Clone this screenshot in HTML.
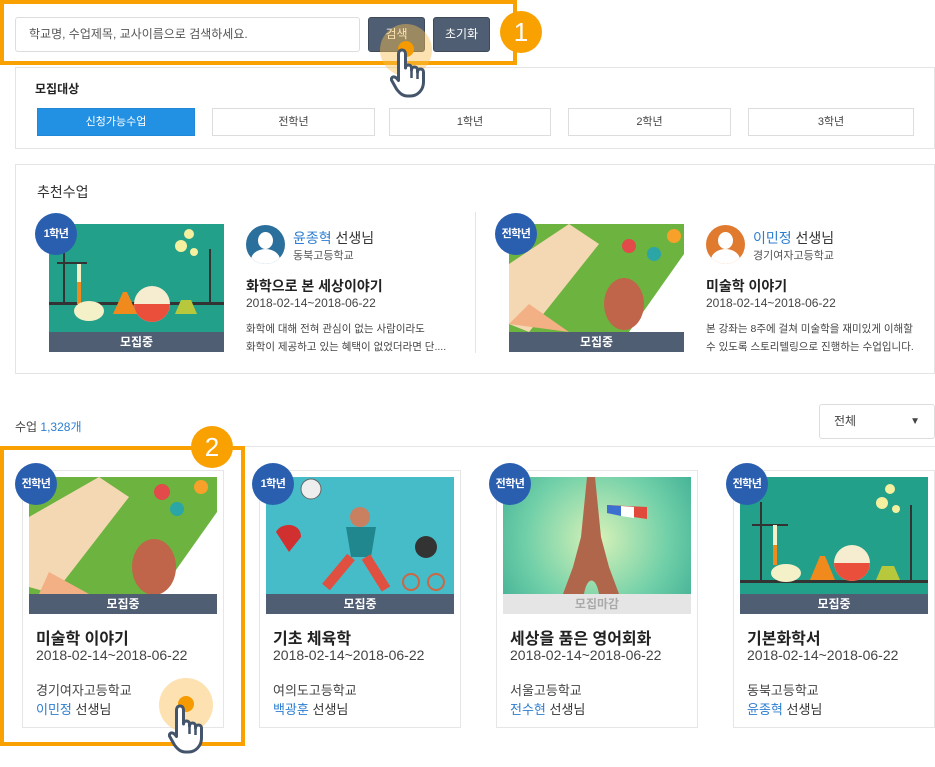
<!DOCTYPE html>
<html><head><meta charset="utf-8"><style>
*{box-sizing:border-box;margin:0;padding:0}
body{width:935px;height:767px;background:#fff;font-family:"Liberation Sans","Noto Sans CJK KR",sans-serif;color:#333;position:relative;overflow:hidden}
.a{position:absolute}
.box{position:absolute;border:1px solid #e4e4e4;background:#fff}
.btn{position:absolute;background:#4f5e72;border:1px solid #3e4a5a;border-radius:3px;color:#fff;font-size:12px;text-align:center;line-height:32px}
.tab{position:absolute;top:108px;height:28px;border:1px solid #ddd;font-size:11px;text-align:center;line-height:26px;color:#444;background:#fff}
.badge{position:absolute;width:42px;height:42px;border-radius:50%;background:#2a5fb0;color:#fff;font-size:11px;font-weight:bold;text-align:center;line-height:42px;letter-spacing:-0.5px}
.ov{position:absolute;left:0;right:0;bottom:0;height:20px;background:#4f5e72;color:#fff;font-size:12px;font-weight:bold;text-align:center;line-height:20px}
.img{position:absolute;overflow:hidden}
.card{position:absolute;top:470px;width:202px;height:258px;border:1px solid #e6e6e6;background:#fff}
.card .t{position:absolute;left:13px;top:154px;font-size:16px;font-weight:bold;color:#222}
.card .d{position:absolute;left:13px;top:176px;font-size:14px;color:#444}
.card .s{position:absolute;left:13px;top:209px;font-size:13px;color:#444}
.card .n{position:absolute;left:13px;top:228px;font-size:13px;color:#333}
.blue{color:#2d7ed0}
.num{position:absolute;width:42px;height:42px;border-radius:50%;background:#f9a100;color:#fff;font-size:26px;text-align:center;line-height:42px}
</style></head><body>

<!-- search -->
<div class="a" style="left:15px;top:17px;width:345px;height:35px;border:1px solid #ddd;border-radius:3px;font-size:12px;color:#555;padding-left:13px;line-height:33px">학교명, 수업제목, 교사이름으로 검색하세요.</div>
<div class="btn" style="left:368px;top:17px;width:57px;height:35px">검색</div>
<div class="btn" style="left:433px;top:17px;width:57px;height:35px">초기화</div>
<div class="a" style="left:0;top:0;width:517px;height:65px;border:4px solid #f9a100"></div>
<div class="num" style="left:500px;top:11px">1</div>

<!-- 모집대상 -->
<div class="box" style="left:15px;top:67px;width:920px;height:82px"></div>
<div class="a" style="left:35px;top:80px;font-size:12px;font-weight:bold;color:#222">모집대상</div>
<div class="tab" style="left:37px;width:158px;background:#2391e3;border-color:#2188d8;color:#fff">신청가능수업</div>
<div class="tab" style="left:212px;width:163px">전학년</div>
<div class="tab" style="left:389px;width:162px">1학년</div>
<div class="tab" style="left:568px;width:163px">2학년</div>
<div class="tab" style="left:748px;width:166px">3학년</div>

<!-- pointer 1 -->
<div class="a" style="left:380px;top:24px;width:52px;height:52px;border-radius:50%;background:rgba(249,190,80,.45)"></div>
<div class="a" style="left:398px;top:41px;width:16px;height:16px;border-radius:50%;background:#f59a00"></div>
<svg class="a" style="left:390px;top:46px" width="48" height="52" viewBox="0 0 48 52"><path d="M12 4c2.5 0 3.5 2 3.5 4v14c0-2 1.5-3 3-3s3 1 3 3v2c0-2 1.5-3 3-3s3 1 3 3v2c0-2 1.5-3 3-3s3 1 3 3v10c0 8-6 14-13 14h-3c-5 0-8-3-11-7L2 35c-1.5-2 0-4.5 2.5-4 1.5.3 3 2 4 3.5V8c0-2 1-4 3.5-4z" fill="#fff" stroke="#44546a" stroke-width="3" stroke-linejoin="round"/><path d="M21.5 24v8M27.5 26v7M33.5 28v6" stroke="#44546a" stroke-width="2.5"/></svg>

<!-- 추천수업 -->
<div class="box" style="left:15px;top:164px;width:920px;height:210px"></div>
<div class="a" style="left:37px;top:182px;font-size:14px;color:#333">추천수업</div>
<div class="a" style="left:475px;top:212px;width:1px;height:141px;background:#e4e4e4"></div>

<div class="img" style="left:49px;top:224px;width:175px;height:128px;background:#22a08a">
 <svg width="175" height="128" viewBox="0 0 175 128"><rect x="0" y="78" width="175" height="3" fill="#333"/><rect x="14" y="20" width="2" height="60" fill="#333"/><rect x="160" y="25" width="2" height="55" fill="#333"/><rect x="8" y="38" width="30" height="2" fill="#333"/><rect x="28" y="40" width="4" height="40" fill="#f4f0c8"/><rect x="28" y="58" width="4" height="22" fill="#f08a1c"/><ellipse cx="40" cy="95" rx="15" ry="10" fill="#f4f0c8" transform="translate(0,-8)"/><path d="M64 90l10-22h4l10 22z" fill="#f08a1c"/><circle cx="103" cy="80" r="18" fill="#f6ecd0"/><path d="M85 80a18 18 0 0036 0z" fill="#ea4f3c"/><path d="M126 90l6-14h10l6 14z" fill="#b8c83c"/><circle cx="140" cy="10" r="5" fill="#f4f0a0"/><circle cx="132" cy="22" r="6" fill="#f4f0a0"/><circle cx="145" cy="28" r="4" fill="#f4f0a0"/></svg>
 <div class="ov">모집중</div></div>
<div class="badge" style="left:35px;top:213px">1학년</div>
<div class="a" style="left:246px;top:225px;width:39px;height:39px;border-radius:50%;background:#2b6f9c;overflow:hidden"><div class="a" style="left:12px;top:7px;width:15px;height:17px;border-radius:50%;background:#fff"></div><div class="a" style="left:5px;top:24px;width:29px;height:22px;border-radius:50%;background:#fff"></div></div>
<div class="a" style="left:293px;top:228px;font-size:14px"><span class="blue">윤종혁</span> 선생님</div>
<div class="a" style="left:293px;top:247px;font-size:11px;color:#555">동북고등학교</div>
<div class="a" style="left:246px;top:276px;font-size:14px;font-weight:bold;color:#222">화학으로 본 세상이야기</div>
<div class="a" style="left:246px;top:296px;font-size:12px;color:#444">2018-02-14~2018-06-22</div>
<div class="a" style="left:246px;top:320px;font-size:10.5px;color:#444;line-height:18px">화학에 대해 전혀 관심이 없는 사람이라도<br>화학이 제공하고 있는 혜택이 없었더라면 단....</div>

<div class="img" style="left:509px;top:224px;width:175px;height:128px;background:#6db33f">
 <svg width="175" height="128" viewBox="0 0 175 128"><path d="M0 40L60 0 90 20 20 108 0 100z" fill="#f4d8b4"/><path d="M120 108L175 30V108z" fill="#fff"/><ellipse cx="115" cy="80" rx="20" ry="26" fill="#c0654a"/><circle cx="120" cy="22" r="7" fill="#e34a4a"/><circle cx="145" cy="30" r="7" fill="#2ba5a5"/><circle cx="165" cy="12" r="7" fill="#f7a12a"/><path d="M0 100L20 80 60 108z" fill="#f2b084"/></svg>
 <div class="ov">모집중</div></div>
<div class="badge" style="left:495px;top:213px">전학년</div>
<div class="a" style="left:706px;top:225px;width:39px;height:39px;border-radius:50%;background:#e07a2e;overflow:hidden"><div class="a" style="left:12px;top:7px;width:15px;height:17px;border-radius:50%;background:#fff"></div><div class="a" style="left:5px;top:24px;width:29px;height:22px;border-radius:50%;background:#fff"></div></div>
<div class="a" style="left:753px;top:228px;font-size:14px"><span class="blue">이민정</span> 선생님</div>
<div class="a" style="left:753px;top:247px;font-size:11px;color:#555">경기여자고등학교</div>
<div class="a" style="left:706px;top:276px;font-size:14px;font-weight:bold;color:#222">미술학 이야기</div>
<div class="a" style="left:706px;top:296px;font-size:12px;color:#444">2018-02-14~2018-06-22</div>
<div class="a" style="left:706px;top:320px;font-size:10.5px;color:#444;line-height:18px">본 강좌는 8주에 걸쳐 미술학을 재미있게 이해할<br>수 있도록 스토리텔링으로 진행하는 수업입니다.</div>

<!-- list header -->
<div class="a" style="left:15px;top:418px;font-size:12px;color:#444">수업 <span class="blue">1,328개</span></div>
<div class="a" style="left:819px;top:404px;width:116px;height:35px;border:1px solid #ddd;border-radius:3px;font-size:12px;color:#444;padding-left:14px;line-height:33px">전체<span class="a" style="right:14px;top:0;font-size:10px">▼</span></div>
<div class="a" style="left:0;top:446px;width:935px;height:1px;background:#e6e6e6"></div>

<!-- cards -->
<div class="card" style="left:22px">
 <div class="img" style="left:6px;top:6px;width:188px;height:137px;background:#6db33f">
 <svg width="188" height="117" viewBox="0 0 188 117"><path d="M0 40L70 0 100 20 25 117 0 110z" fill="#f4d8b4"/><path d="M130 117L188 35V117z" fill="#fff"/><ellipse cx="125" cy="90" rx="22" ry="28" fill="#c0654a"/><circle cx="133" cy="15" r="8" fill="#e34a4a"/><circle cx="148" cy="32" r="7" fill="#2ba5a5"/><circle cx="172" cy="10" r="7" fill="#f7a12a"/><path d="M20 95l40 22H10z" fill="#f2b084"/></svg>
 <div class="ov">모집중</div></div>
 <div class="t">미술학 이야기</div><div class="d">2018-02-14~2018-06-22</div><div class="s">경기여자고등학교</div><div class="n"><span class="blue">이민정</span> 선생님</div>
</div>
<div class="card" style="left:259px">
 <div class="img" style="left:6px;top:6px;width:188px;height:137px;background:#46bcc8">
 <svg width="188" height="117" viewBox="0 0 188 117"><circle cx="94" cy="40" r="10" fill="#c88060"/><path d="M80 50h30l-5 30H85z" fill="#21878f"/><path d="M85 80l-25 30M100 80l20 32" stroke="#e05040" stroke-width="10"/><path d="M10 55c5-10 25-10 25 5l-12 15z" fill="#d03030"/><circle cx="45" cy="12" r="10" fill="#eee" stroke="#666"/><circle cx="160" cy="70" r="11" fill="#333"/><circle cx="145" cy="105" r="8" fill="none" stroke="#c64" stroke-width="2"/><circle cx="170" cy="105" r="8" fill="none" stroke="#c64" stroke-width="2"/></svg>
 <div class="ov">모집중</div></div>
 <div class="t">기초 체육학</div><div class="d">2018-02-14~2018-06-22</div><div class="s">여의도고등학교</div><div class="n"><span class="blue">백광훈</span> 선생님</div>
</div>
<div class="card" style="left:496px">
 <div class="img" style="left:6px;top:6px;width:188px;height:137px;background:radial-gradient(circle at 50% 45%,#d8f2b8,#6fcfa8 60%,#3fae94)">
 <svg width="188" height="117" viewBox="0 0 188 117"><path d="M84 0h8l6 60 8 30 10 27H96c-3-18-12-18-15 0H60l10-27 8-30z" fill="#b0664a"/><path d="M104 28l40 2 0 12-40-6z" fill="#e04a3c"/><path d="M104 28l14 1v10l-14-3z" fill="#3d6fd0"/><path d="M118 29l13 1v11l-13-2z" fill="#fff"/></svg>
 <div class="ov" style="background:#e5e5e5;color:#aaa">모집마감</div></div>
 <div class="t">세상을 품은 영어회화</div><div class="d">2018-02-14~2018-06-22</div><div class="s">서울고등학교</div><div class="n"><span class="blue">전수현</span> 선생님</div>
</div>
<div class="card" style="left:733px">
 <div class="img" style="left:6px;top:6px;width:188px;height:137px;background:#22a08a">
 <svg width="188" height="117" viewBox="0 0 188 117"><rect x="0" y="103" width="188" height="3" fill="#333"/><rect x="20" y="25" width="2" height="80" fill="#333"/><rect x="170" y="28" width="2" height="77" fill="#333"/><rect x="12" y="47" width="36" height="2" fill="#333"/><rect x="33" y="48" width="4" height="40" fill="#f4f0c8"/><rect x="33" y="68" width="4" height="20" fill="#f08a1c"/><ellipse cx="46" cy="96" rx="15" ry="9" fill="#f4f0c8"/><path d="M70 103l10-24h5l10 24z" fill="#f08a1c"/><circle cx="112" cy="86" r="18" fill="#f6ecd0"/><path d="M94 86a18 18 0 0036 0z" fill="#ea4f3c"/><path d="M136 103l6-14h12l6 14z" fill="#b8c83c"/><circle cx="150" cy="12" r="5" fill="#f4f0a0"/><circle cx="142" cy="26" r="6" fill="#f4f0a0"/><circle cx="156" cy="32" r="4" fill="#f4f0a0"/></svg>
 <div class="ov">모집중</div></div>
 <div class="t">기본화학서</div><div class="d">2018-02-14~2018-06-22</div><div class="s">동북고등학교</div><div class="n"><span class="blue">윤종혁</span> 선생님</div>
</div>

<!-- badges -->
<div class="badge" style="left:15px;top:463px">전학년</div>
<div class="badge" style="left:252px;top:463px">1학년</div>
<div class="badge" style="left:489px;top:463px">전학년</div>
<div class="badge" style="left:726px;top:463px">전학년</div>

<!-- box 2 -->
<div class="a" style="left:0;top:446px;width:245px;height:300px;border:4px solid #f9a100"></div>
<div class="num" style="left:191px;top:426px">2</div>
<div class="a" style="left:159px;top:678px;width:54px;height:54px;border-radius:50%;background:rgba(253,215,150,.75)"></div>
<div class="a" style="left:178px;top:696px;width:16px;height:16px;border-radius:50%;background:#f59a00"></div>
<svg class="a" style="left:168px;top:702px" width="48" height="52" viewBox="0 0 48 52"><path d="M12 4c2.5 0 3.5 2 3.5 4v14c0-2 1.5-3 3-3s3 1 3 3v2c0-2 1.5-3 3-3s3 1 3 3v2c0-2 1.5-3 3-3s3 1 3 3v10c0 8-6 14-13 14h-3c-5 0-8-3-11-7L2 35c-1.5-2 0-4.5 2.5-4 1.5.3 3 2 4 3.5V8c0-2 1-4 3.5-4z" fill="#fff" stroke="#44546a" stroke-width="3" stroke-linejoin="round"/><path d="M21.5 24v8M27.5 26v7M33.5 28v6" stroke="#44546a" stroke-width="2.5"/></svg>
</body></html>
